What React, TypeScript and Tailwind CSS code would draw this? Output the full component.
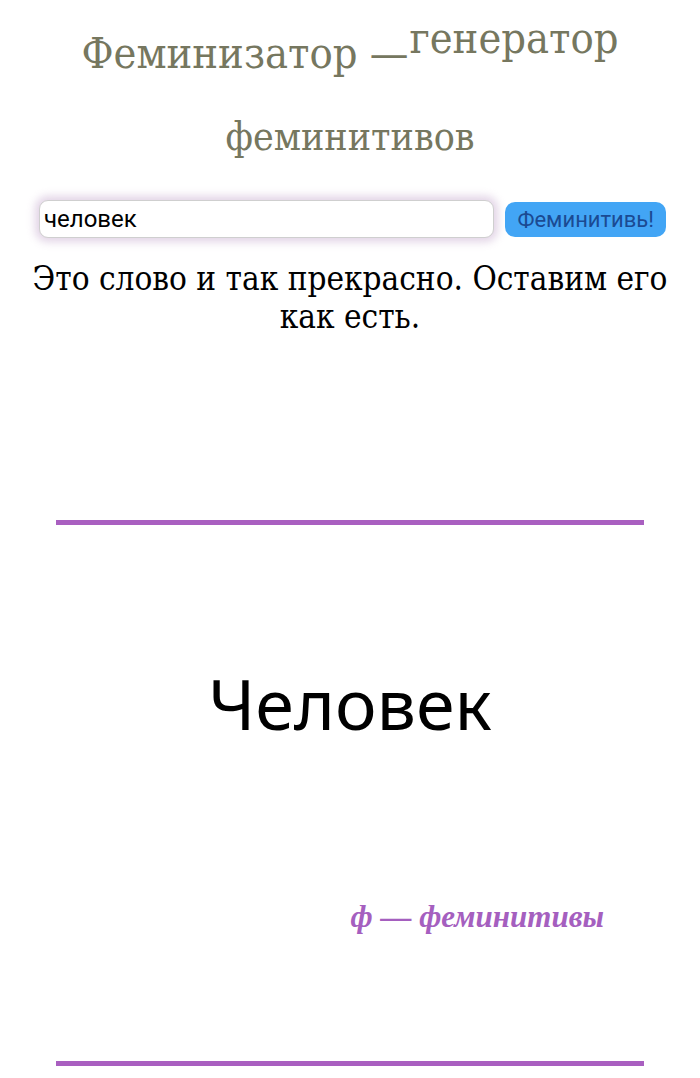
import { useState } from "react";

const serif = "font-['DejaVu_Serif_Condensed','DejaVu_Serif',serif] font-stretch-condensed";

export default function App() {
  const [word, setWord] = useState("человек");

  return (
    <div className="min-h-[1078px] w-[700px] bg-white">
      {/* Header */}
      <h1 className={`${serif} px-6 pt-[8px] text-center font-normal text-[#76775f]`}>
        <span className="block text-[43px] leading-[60px]">
          Феминизатор —<span className="ml-px align-[15px]">генератор</span>
        </span>
        <span className="mt-[29px] block text-[39px] leading-[50px]">феминитивов</span>
      </h1>

      {/* Input row */}
      <div className="mt-[38px] flex items-center gap-[11px] pl-[39px] pr-[34px]">
        <input
          value={word}
          onChange={(e) => setWord(e.target.value)}
          className="h-[38px] min-w-0 flex-1 rounded-[9px] border border-[#cfcfcf] bg-white px-[4px] font-['Roboto',sans-serif] text-[24px] text-black shadow-[0_0_9px_4px_rgba(190,160,200,0.45)] outline-none"
        />
        <button className="h-[35px] shrink-0 rounded-[10px] bg-[#42a5f5] px-[12px] font-['Roboto',sans-serif] text-[22px] text-[#1b4a92]">
          Феминитивь!
        </button>
      </div>

      {/* Result text */}
      <p className={`${serif} mt-[22px] px-[24px] text-center text-[33px] leading-[38px] text-black`}>
        Это слово и так прекрасно. Оставим его как есть.
      </p>

      {/* Share card */}
      <div className="mx-auto mt-[184px] flex h-[546px] w-[588px] flex-col border-y-[5px] border-[#a95fc0]">
        <div className="mt-[143px] text-center font-['Noto_Sans',sans-serif] text-[70px] leading-none text-black">
          Человек
        </div>
        <div className="mt-[156px] pr-[40px] text-right font-['Liberation_Serif',serif] text-[31px] font-semibold italic text-[#a55fbf]">
          ф — феминитивы
        </div>
      </div>
    </div>
  );
}
